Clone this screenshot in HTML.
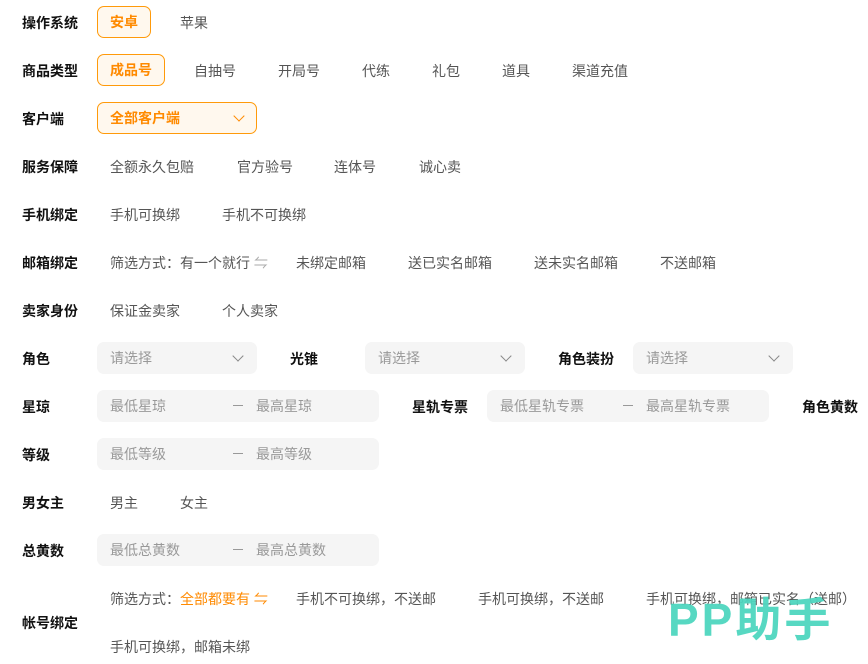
<!DOCTYPE html>
<html><head><meta charset="utf-8"><style>
body{margin:0;width:868px;height:664px;background:#fff;position:relative;overflow:hidden;font-family:"Liberation Sans","Noto Sans CJK SC",sans-serif;font-size:14px;color:#555}
.a{position:absolute;line-height:20px;white-space:nowrap}
.l{font-weight:bold;color:#111}
.sel{position:absolute;box-sizing:border-box;border:1px solid #ff9a0a;background:#fff8ee;border-radius:7px;color:#ff8a00;font-weight:bold;line-height:31px;padding-left:12px}
.box{position:absolute;background:#f5f5f5;border-radius:7px;height:32px;color:#999;line-height:32px}
.chev{position:absolute;width:7px;height:7px;border-right:1.5px solid #888;border-bottom:1.5px solid #888;transform:rotate(45deg)}
.o{color:#ff8a00}
.d{position:absolute;left:136px;top:15px;width:10px;height:1px;background:#999}
</style></head><body>
<span class="a l" style="left:22px;top:13px">操作系统</span>
<div class="sel" style="left:97px;top:6px;width:54px;height:32px">安卓</div>
<span class="a" style="left:180px;top:13px">苹果</span>

<span class="a l" style="left:22px;top:61px">商品类型</span>
<div class="sel" style="left:97px;top:54px;width:68px;height:32px">成品号</div>
<span class="a" style="left:194px;top:61px">自抽号</span>
<span class="a" style="left:278px;top:61px">开局号</span>
<span class="a" style="left:362px;top:61px">代练</span>
<span class="a" style="left:432px;top:61px">礼包</span>
<span class="a" style="left:502px;top:61px">道具</span>
<span class="a" style="left:572px;top:61px">渠道充值</span>

<span class="a l" style="left:22px;top:109px">客户端</span>
<div class="sel" style="left:97px;top:102px;width:160px;height:32px">全部客户端<span class="chev" style="left:137px;top:9px;border-color:#ff8a00"></span></div>

<span class="a l" style="left:22px;top:157px">服务保障</span>
<span class="a" style="left:110px;top:157px">全额永久包赔</span>
<span class="a" style="left:237px;top:157px">官方验号</span>
<span class="a" style="left:334px;top:157px">连体号</span>
<span class="a" style="left:419px;top:157px">诚心卖</span>

<span class="a l" style="left:22px;top:205px">手机绑定</span>
<span class="a" style="left:110px;top:205px">手机可换绑</span>
<span class="a" style="left:222px;top:205px">手机不可换绑</span>

<span class="a l" style="left:22px;top:253px">邮箱绑定</span>
<span class="a" style="left:110px;top:253px">筛选方式：有一个就行 <span style="color:#aaa">⇋</span></span>
<span class="a" style="left:296px;top:253px">未绑定邮箱</span>
<span class="a" style="left:408px;top:253px">送已实名邮箱</span>
<span class="a" style="left:534px;top:253px">送未实名邮箱</span>
<span class="a" style="left:660px;top:253px">不送邮箱</span>

<span class="a l" style="left:22px;top:301px">卖家身份</span>
<span class="a" style="left:110px;top:301px">保证金卖家</span>
<span class="a" style="left:222px;top:301px">个人卖家</span>

<span class="a l" style="left:22px;top:349px">角色</span>
<div class="box" style="left:97px;top:342px;width:160px"><span style="margin-left:13px">请选择</span><span class="chev" style="left:137px;top:10px"></span></div>
<span class="a l" style="left:290px;top:349px">光锥</span>
<div class="box" style="left:365px;top:342px;width:160px"><span style="margin-left:13px">请选择</span><span class="chev" style="left:137px;top:10px"></span></div>
<span class="a l" style="left:558px;top:349px">角色装扮</span>
<div class="box" style="left:633px;top:342px;width:160px"><span style="margin-left:13px">请选择</span><span class="chev" style="left:137px;top:10px"></span></div>

<span class="a l" style="left:22px;top:397px">星琼</span>
<div class="box" style="left:97px;top:390px;width:282px"><span class="a" style="left:13px;top:6px">最低星琼</span><span class="d"></span><span class="a" style="left:159px;top:6px">最高星琼</span></div>
<span class="a l" style="left:412px;top:397px">星轨专票</span>
<div class="box" style="left:487px;top:390px;width:282px"><span class="a" style="left:13px;top:6px">最低星轨专票</span><span class="d"></span><span class="a" style="left:159px;top:6px">最高星轨专票</span></div>
<span class="a l" style="left:802px;top:397px">角色黄数</span>

<span class="a l" style="left:22px;top:445px">等级</span>
<div class="box" style="left:97px;top:438px;width:282px"><span class="a" style="left:13px;top:6px">最低等级</span><span class="d"></span><span class="a" style="left:159px;top:6px">最高等级</span></div>

<span class="a l" style="left:22px;top:493px">男女主</span>
<span class="a" style="left:110px;top:493px">男主</span>
<span class="a" style="left:180px;top:493px">女主</span>

<span class="a l" style="left:22px;top:541px">总黄数</span>
<div class="box" style="left:97px;top:534px;width:282px"><span class="a" style="left:13px;top:6px">最低总黄数</span><span class="d"></span><span class="a" style="left:159px;top:6px">最高总黄数</span></div>

<span class="a l" style="left:22px;top:613px">帐号绑定</span>
<span class="a" style="left:110px;top:589px">筛选方式：<span class="o">全部都要有 ⇋</span></span>
<span class="a" style="left:296px;top:589px">手机不可换绑，不送邮</span>
<span class="a" style="left:478px;top:589px">手机可换绑，不送邮</span>
<span class="a" style="left:646px;top:589px">手机可换绑，邮箱已实名（送邮）</span>
<span class="a" style="left:110px;top:637px">手机可换绑，邮箱未绑</span>

<span class="a" style="left:668px;top:595px;font-size:46px;line-height:50px;font-weight:bold;letter-spacing:3px;color:#4fd6bf;opacity:.95">PP助手</span>
</body></html>
